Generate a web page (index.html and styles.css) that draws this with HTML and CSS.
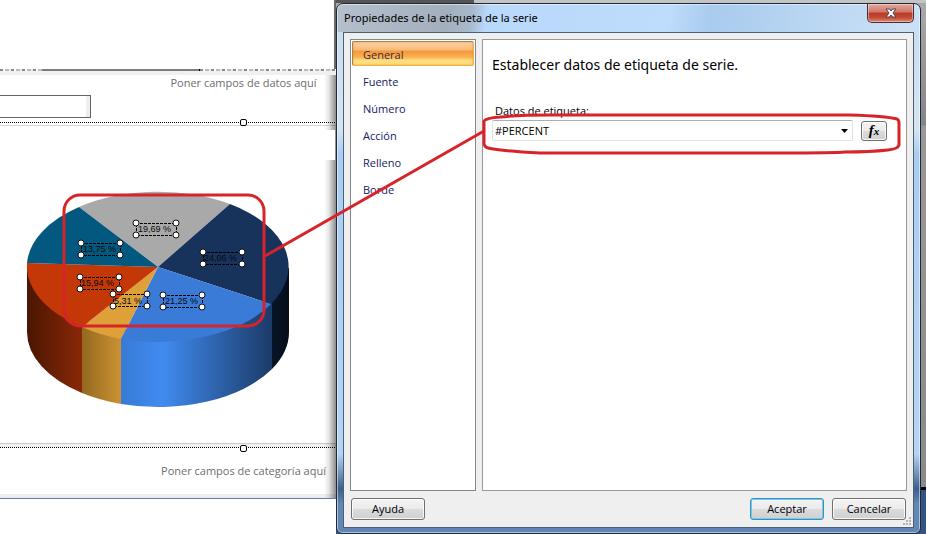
FILE: index.html
```
<!DOCTYPE html>
<html lang="es">
<head>
    <meta charset="utf-8">
    <title>Propiedades de la etiqueta de la serie</title>
    <link rel="stylesheet" href="styles.css">
</head>
<body>
    <div class="report">
        <div class="report-top"></div>
        <div class="clipped-row">
            <span class="clipped-text short"></span>
            <span class="clipped-line"></span>
            <span class="clipped-text"></span>
        </div>
        <div class="report-body">
            <p class="drop-hint">Poner campos de datos aquí</p>
            <input class="filter-box" type="text" aria-label="Filtro">
            <div class="edge top"><span class="handle"></span></div>
            <svg class="chart" width="320" height="317" viewBox="0 126 320 317">
                <defs>
                    <linearGradient id="sideRed" x1="0" x2="1">
                        <stop offset="0" stop-color="#4a1602"/>
                        <stop offset="1" stop-color="#8a2807"/>
                    </linearGradient>
                    <linearGradient id="sideYellow" x1="0" x2="1">
                        <stop offset="0" stop-color="#93691f"/>
                        <stop offset="1" stop-color="#cb9233"/>
                    </linearGradient>
                    <linearGradient id="sideBlue" x1="0" x2="1">
                        <stop offset="0" stop-color="#387ad5"/>
                        <stop offset="0.27" stop-color="#418bf0"/>
                        <stop offset="1" stop-color="#1b3b68"/>
                    </linearGradient>
                    <linearGradient id="sideNavy" x1="0" x2="1">
                        <stop offset="0" stop-color="#081527"/>
                        <stop offset="1" stop-color="#050d18"/>
                    </linearGradient>
                </defs>
                <!-- sides -->
                <path fill="url(#sideRed)" d="M27 263V332A131 75 0 0 0 82 393V320Z"/>
                <path fill="url(#sideYellow)" d="M82 320V393A131 75 0 0 0 121 404V330Z"/>
                <path fill="url(#sideBlue)" d="M121 330V404A131 75 0 0 0 272 369V300Z"/>
                <path fill="url(#sideNavy)" d="M272 300V369A131 75 0 0 0 289 332V267Z"/>
                <!-- slices -->
                <path fill="#a9a9a9" d="M158 267L79 207A131 75 0 0 1 230 204Z"/>
                <path fill="#17335c" d="M158 267L230 204A131 75 0 0 1 271 304Z"/>
                <path fill="#397bd6" d="M158 267L271 304A131 75 0 0 1 121 339Z"/>
                <path fill="#dfa03a" d="M158 267L121 339A131 75 0 0 1 82 327Z"/>
                <path fill="#c43808" d="M158 267L82 327A131 75 0 0 1 27 263Z"/>
                <path fill="#03587f" d="M158 267L27 263A131 75 0 0 1 79 207Z"/>
                <!-- labels -->
                <g class="label-box">
                    <rect x="136" y="223" width="40" height="12"/>
                    <rect x="81" y="243" width="39" height="12"/>
                    <rect x="203" y="252" width="39" height="12"/>
                    <rect x="80" y="277" width="39" height="12"/>
                    <rect x="113" y="294" width="34" height="12"/>
                    <rect x="163" y="295" width="39" height="12"/>
                </g>
                <g class="label-text">
                    <text x="138" y="232">19,69 %</text>
                    <text x="83" y="252">13,75 %</text>
                    <text x="204" y="261">24,06 %</text>
                    <text x="81" y="286">15,94 %</text>
                    <text x="114" y="304">5,31 %</text>
                    <text x="165" y="304">21,25 %</text>
                </g>
                <g class="label-grip">
                    <circle cx="136" cy="223" r="3"/><circle cx="176" cy="223" r="3"/><circle cx="136" cy="235" r="3"/><circle cx="176" cy="235" r="3"/>
                    <circle cx="81" cy="243" r="3"/><circle cx="120" cy="243" r="3"/><circle cx="81" cy="255" r="3"/><circle cx="120" cy="255" r="3"/>
                    <circle cx="203" cy="252" r="3"/><circle cx="242" cy="252" r="3"/><circle cx="203" cy="264" r="3"/><circle cx="242" cy="264" r="3"/>
                    <circle cx="80" cy="277" r="3"/><circle cx="119" cy="277" r="3"/><circle cx="80" cy="289" r="3"/><circle cx="119" cy="289" r="3"/>
                    <circle cx="113" cy="294" r="3"/><circle cx="147" cy="294" r="3"/><circle cx="113" cy="306" r="3"/><circle cx="147" cy="306" r="3"/>
                    <circle cx="163" cy="295" r="3"/><circle cx="202" cy="295" r="3"/><circle cx="163" cy="307" r="3"/><circle cx="202" cy="307" r="3"/>
                </g>
            </svg>
            <div class="edge bottom"><span class="handle"></span></div>
            <p class="drop-hint category">Poner campos de categoría aquí</p>
        </div>
    </div>

    <div class="desktop">
        <div class="dialog" role="dialog" aria-labelledby="dialogTitle">
            <div class="titlebar">
                <span id="dialogTitle">Propiedades de la etiqueta de la serie</span>
                <button class="close" type="button" aria-label="Cerrar">
                    <svg width="12" height="10" viewBox="0 0 12 10">
                        <path d="M1 1H4.5L6 3L7.5 1H11L8 5L11 9H7.5L6 7L4.5 9H1L4 5Z" fill="#fff" stroke="#4d4048"/>
                    </svg>
                </button>
            </div>
            <form class="client">
                <div class="columns">
                    <nav class="tabs">
                        <a href="#general" class="active">General</a>
                        <a href="#fuente">Fuente</a>
                        <a href="#numero">Número</a>
                        <a href="#accion">Acción</a>
                        <a href="#relleno">Relleno</a>
                        <a href="#borde">Borde</a>
                    </nav>
                    <div class="panel">
                        <h1>Establecer datos de etiqueta de serie.</h1>
                        <label for="labelData">Datos de etiqueta:</label>
                        <div class="field">
                            <select id="labelData">
                                <option>#PERCENT</option>
                            </select>
                            <button class="btn fx" type="button" aria-label="Expresión"><i>f<small>x</small></i></button>
                        </div>
                    </div>
                </div>
                <div class="buttons">
                    <button class="btn help" type="button">Ayuda</button>
                    <button class="btn default" type="button">Aceptar</button>
                    <button class="btn" type="button">Cancelar</button>
                </div>
                <svg class="grip" width="8" height="8" viewBox="0 0 8 8" fill="#b4b4b4">
                    <path d="M6 0h2v2h-2zM3 3h2v2h-2zM6 3h2v2h-2zM0 6h2v2h-2zM3 6h2v2h-2zM6 6h2v2h-2z"/>
                </svg>
            </form>
        </div>
    </div>

    <!-- red marks that tie the field to the chart labels -->
    <svg class="marks" width="926" height="534" viewBox="0 0 926 534">
        <rect x="64" y="195" width="200" height="131" rx="16"/>
        <path d="M265 256L484 131"/>
        <path d="M484 121Q486 118 500 117Q520 115 550 115H850Q885 116 897 119Q899 120 899 123V145Q898 149 888 150Q870 152 845 152Q835 153 780 153H540Q500 151 488 148Q484 147 484 143Z"/>
    </svg>
</body>
</html>
```
FILE: styles.css
```
* {
    box-sizing: border-box;
}
body {
    margin: 0;
    min-height: 100vh;
    display: flex;
    position: relative;
    overflow: hidden;
    background: #fff;
    font-family: "Open Sans", "Noto Sans", sans-serif;
    font-size: 11px;
    color: #000;
}
button, input, select {
    font: inherit;
    color: inherit;
}

/* report designer */
.report {
    flex: 0 0 336px;
    display: flex;
    flex-direction: column;
}
.report-top {
    height: 69px;
    border-right: 2px solid #6a6a6a;
}
.clipped-row {
    display: flex;
    height: 2px;
}
.clipped-text {
    flex: 1;
    background: repeating-linear-gradient(90deg, #888 0 3px, #fff 3px 5px, #bbb 5px 9px, #eee 9px 11px);
}
.clipped-text.short {
    flex: 0 0 42px;
}
.clipped-line {
    flex: 0 0 158px;
    background: #7d7d7d;
    border-right: 1px solid #000;
}
.report-body {
    position: relative;
    border-top: 4px solid #f0f0f0;
    border-bottom: 1px solid #5f7fa9;
    background: linear-gradient(#eee, #eee) bottom / 100% 4px no-repeat;
}
.report-body::after {
    content: "";
    position: absolute;
    top: 0;
    right: 0;
    bottom: 0;
    width: 12px;
    background:
        linear-gradient(#fff, #fff) 0 55px / 11px 30px no-repeat,
        linear-gradient(90deg, rgba(0, 0, 0, 0), rgba(0, 0, 0, 0.1) 40%, rgba(0, 0, 0, 0.45));
}
.drop-hint {
    margin: 0;
    padding-left: 151px;
    height: 20px;
    line-height: 16px;
    text-align: center;
    color: #6d6d6d;
}
.drop-hint.category {
    height: 50px;
    padding-top: 15px;
}
.filter-box {
    display: block;
    width: 91px;
    height: 23px;
    border: 1px solid #666;
    border-left: 0;
    box-shadow: inset -4px 0 #eee;
    background: #fff;
}
.edge {
    position: relative;
    height: 8px;
    padding-top: 4px;
    border-bottom: 1px solid #d8d8d8;
}
.edge::before {
    content: "";
    display: block;
    height: 1px;
    background: repeating-linear-gradient(90deg, #000 0 1px, #fff 1px 2px);
}
.edge.bottom {
    height: 5px;
    padding-top: 3px;
    border-top: 1px solid #ccc;
    border-bottom: 0;
    background: #f0f0f0;
}
.handle {
    position: absolute;
    left: 240px;
    top: 1px;
    width: 7px;
    height: 7px;
    border: 1px solid #000;
    border-radius: 2px;
    background: #fff;
}
.chart {
    display: block;
}
.label-box rect {
    fill: none;
    stroke: #000;
    stroke-dasharray: 3 1;
    shape-rendering: crispEdges;
}
.label-text text {
    font-family: "Liberation Sans", Arial, sans-serif;
    font-size: 9px;
    fill: #0a0a0a;
}
.label-grip circle {
    fill: #fff;
    stroke: #111;
}

/* window behind the dialog */
.desktop {
    flex: 1;
    display: flex;
    padding: 3px 5px 0 0;
    background:
        linear-gradient(90deg, #555 0 138px, #c4c4c4 138px) 0 0 / 100% 3px no-repeat,
        linear-gradient(#aaa 0, #858585 125px, #999 126px, #8a8a8a 487px, #000 487px, #000 490px, #36527f 490px);
}

/* dialog */
.dialog {
    flex: 1;
    display: flex;
    flex-direction: column;
    padding: 0 6px 5px;
    border: 1px solid #1c2938;
    border-radius: 7px 7px 6px 6px;
    background:
        linear-gradient(100deg, #b4c0cc 0, #a3afbc 110px, #a8b9cc 135px, #b9d9fb 150px, #bedcfb 330px, #a9cbee 370px, #c9e0f6 560px) 0 0 / 100% 28px no-repeat,
        linear-gradient(#c8dced 0, #d4e4f3 125px, #a9cdf2 150px, #b3d4f5 450px, #3c5f8c 485px, #6287b5 500px);
    box-shadow: inset 0 0 0 1px rgba(255, 255, 255, 0.5);
}
.titlebar {
    display: flex;
    justify-content: space-between;
    height: 28px;
    padding-left: 1px;
    font-family: "Noto Sans", sans-serif;
    line-height: 27px;
}
.close {
    display: flex;
    align-items: center;
    justify-content: center;
    width: 47px;
    height: 19px;
    padding: 0;
    border: 1px solid #4d2a32;
    border-top: 0;
    border-radius: 0 0 5px 5px;
    background: linear-gradient(#e3a99f 0, #d0776a 45%, #b83a26 50%, #c44a35 75%, #dc8a73 100%);
    box-shadow: inset 0 0 0 1px rgba(255, 255, 255, 0.4);
}
.client {
    position: relative;
    flex: 1;
    display: flex;
    flex-direction: column;
    padding: 6px 6px 7px;
    border: 1px solid #4b5f77;
    background: #efefef;
}
.columns {
    flex: 1;
    display: flex;
    gap: 6px;
}
.tabs {
    flex: 0 0 126px;
    display: flex;
    flex-direction: column;
    gap: 2px;
    padding: 1px;
    border: 1px solid #828790;
    background: #fff;
}
.tabs a {
    height: 25px;
    padding: 2px 10px 0;
    border: 1px solid transparent;
    line-height: 22px;
    color: #15215f;
    text-decoration: none;
}
.tabs a.active {
    border: 1px solid #a5854a;
    border-right-color: #f2b33c;
    border-bottom-color: #f2b33c;
    border-radius: 2px;
    background: linear-gradient(#fbd3a7 0, #f9b874 35%, #f4983a 40%, #f9b052 65%, #fedd7c 80%, #fedf80 100%);
    box-shadow: inset 0 0 2px #d98a35;
    color: #3a2a3f;
}
.panel {
    flex: 1;
    padding: 15px 9px;
    border: 1px solid #999;
    background: #fff;
}
.panel h1 {
    margin: 0 0 27px;
    font-family: "Noto Sans", sans-serif;
    font-size: 14px;
    font-weight: normal;
    line-height: 20px;
}
.panel label {
    display: block;
    height: 18px;
    padding-left: 3px;
    line-height: 18px;
}
.field {
    display: flex;
    align-items: flex-end;
    gap: 8px;
    padding-right: 10px;
}
.field select {
    flex: 1;
    height: 21px;
    padding: 0 3px 1px 2px;
    border: 1px solid #e0e3e6;
    border-top-color: #abadb3;
    border-radius: 2px;
    appearance: none;
    background: #fff url("data:image/svg+xml,%3Csvg xmlns='http://www.w3.org/2000/svg' width='7' height='4'%3E%3Cpath d='M0 0h7L3.5 4z'/%3E%3C/svg%3E") right 4px center no-repeat;
}
.btn {
    width: 74px;
    height: 22px;
    padding: 0 0 1px;
    border: 1px solid #707070;
    border-radius: 3px;
    background: linear-gradient(#f4f4f4 0, #ebebeb 48%, #dcdcdc 50%, #cfcfcf 100%);
    box-shadow: inset 0 0 0 1px rgba(255, 255, 255, 0.8);
}
.btn.default {
    border-color: #3c8fb8;
    box-shadow: inset 0 0 0 1px #6fcdf0;
}
.btn.fx {
    width: 26px;
    height: 20px;
    font: bold 15px/16px "Liberation Serif", serif;
}
.btn.fx small {
    font-size: 11px;
}
.buttons {
    display: flex;
    gap: 8px;
    padding: 7px 1px 0;
}
.help {
    margin-right: auto;
}
.grip {
    position: absolute;
    right: 2px;
    bottom: 2px;
}

/* annotation overlay */
.marks {
    position: absolute;
    top: 0;
    left: 0;
    fill: none;
    stroke: #d8232b;
    stroke-width: 3;
    pointer-events: none;
}
```
